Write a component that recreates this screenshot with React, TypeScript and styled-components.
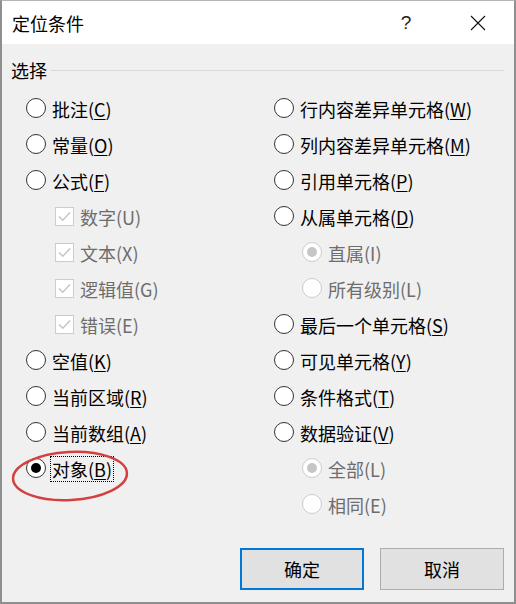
import React from "react";
import styled, { createGlobalStyle, css } from "styled-components";

const GlobalStyle = createGlobalStyle`
  html, body {
    margin: 0;
    padding: 0;
    background: #ffffff;
  }
  * {
    box-sizing: border-box;
  }
`;

const Dialog = styled.div`
  position: relative;
  width: 516px;
  height: 604px;
  display: flex;
  flex-direction: column;
  border: 2px solid #8f8f8f;
  border-top: 1px solid #b5b5b5;
  font-family: "Noto Sans CJK SC", "Microsoft YaHei", sans-serif;
  color: #000;
  background: #f0f0f0;
`;

const TitleBar = styled.div`
  height: 43px;
  display: flex;
  align-items: center;
  padding: 0 0 0 10px;
  background: #ffffff;
  font-size: 18px;
`;

const Title = styled.div`
  flex: 1;
`;

const TitleButton = styled.div`
  width: 72px;
  height: 43px;
  display: flex;
  align-items: center;
  justify-content: center;
  font-size: 19px;
  font-family: "Liberation Sans", sans-serif;
  color: #222;
`;

const Body = styled.div`
  flex: 1;
  display: flex;
  flex-direction: column;
  padding: 14px 10px 12px 9px;
`;

const GroupHeader = styled.div`
  height: 24px;
  display: flex;
  align-items: center;
  gap: 4px;
  font-size: 18px;

  &::after {
    content: "";
    flex: 1;
    height: 1px;
    background: #dadada;
    margin-top: 1px;
  }
`;

const Columns = styled.div`
  display: grid;
  grid-template-columns: 248px 1fr;
  padding-left: 15px;
  margin-top: 8px;
`;

const Column = styled.div`
  display: flex;
  flex-direction: column;
`;

const Row = styled.div<{ $indent?: boolean }>`
  position: relative;
  height: 36px;
  display: flex;
  align-items: center;
  padding-left: ${(p) => (p.$indent ? 28 : 0)}px;
`;

const Label = styled.span<{ $disabled?: boolean; $focused?: boolean }>`
  font-size: 18px;
  line-height: 24px;
  margin-left: 4px;
  padding: 0 1px;
  white-space: nowrap;
  color: ${(p) => (p.$disabled ? "#6d6d6d" : "#000")};
  border: 1px dotted ${(p) => (p.$focused ? "#000" : "transparent")};
  margin-top: 1px;

  u {
    text-decoration-thickness: 1px;
    text-underline-offset: 2px;
  }
`;

const RadioCircle = styled.span<{ $checked?: boolean; $disabled?: boolean }>`
  flex: none;
  width: 20px;
  height: 20px;
  border-radius: 50%;
  background: #ffffff;
  border: 1px solid ${(p) => (p.$disabled ? "#cccccc" : "#333333")};
  display: flex;
  align-items: center;
  justify-content: center;

  ${(p) =>
    p.$checked &&
    css`
      &::after {
        content: "";
        width: 10px;
        height: 10px;
        border-radius: 50%;
        background: ${p.$disabled ? "#c6c6c6" : "#000"};
      }
    `}
`;

const CheckBox = styled.span`
  flex: none;
  width: 19px;
  height: 19px;
  margin-left: 1px;
  border: 1px solid #cccccc;
  background: #ffffff;
  display: flex;
  align-items: center;
  justify-content: center;
`;

const Ellipse = styled.svg`
  position: absolute;
  left: 7px;
  top: 448px;
  pointer-events: none;
`;

const Footer = styled.div`
  margin-top: auto;
  display: flex;
  justify-content: flex-end;
  gap: 16px;
`;

const Button = styled.button<{ $primary?: boolean }>`
  width: 124px;
  height: 42px;
  background: #e1e1e1;
  font-family: "Noto Sans CJK SC", "Microsoft YaHei", sans-serif;
  font-size: 18px;
  color: #000;
  border: ${(p) => (p.$primary ? "2px solid #0078d7" : "1px solid #adadad")};
  padding: 0;
`;

type Item = {
  text: string;
  key?: string;
  kind?: "radio" | "check";
  indent?: boolean;
  disabled?: boolean;
  checked?: boolean;
  focused?: boolean;
};

const leftItems: Item[] = [
  { text: "批注", key: "C" },
  { text: "常量", key: "O" },
  { text: "公式", key: "F" },
  { text: "数字", key: "U", kind: "check", indent: true, disabled: true, checked: true },
  { text: "文本", key: "X", kind: "check", indent: true, disabled: true, checked: true },
  { text: "逻辑值", key: "G", kind: "check", indent: true, disabled: true, checked: true },
  { text: "错误", key: "E", kind: "check", indent: true, disabled: true, checked: true },
  { text: "空值", key: "K" },
  { text: "当前区域", key: "R" },
  { text: "当前数组", key: "A" },
  { text: "对象", key: "B", checked: true, focused: true },
];

const rightItems: Item[] = [
  { text: "行内容差异单元格", key: "W" },
  { text: "列内容差异单元格", key: "M" },
  { text: "引用单元格", key: "P" },
  { text: "从属单元格", key: "D" },
  { text: "直属", key: "I", indent: true, disabled: true, checked: true },
  { text: "所有级别", key: "L", indent: true, disabled: true },
  { text: "最后一个单元格", key: "S" },
  { text: "可见单元格", key: "Y" },
  { text: "条件格式", key: "T" },
  { text: "数据验证", key: "V" },
  { text: "全部", key: "L", indent: true, disabled: true, checked: true },
  { text: "相同", key: "E", indent: true, disabled: true },
];

const CheckMark = () => (
  <svg width="13" height="11" viewBox="0 0 13 11">
    <path d="M1 5.5 L4.8 9.2 L12 1.5" fill="none" stroke="#c4c4c4" strokeWidth="1.4" />
  </svg>
);

const Option: React.FC<{ item: Item }> = ({ item }) => (
  <Row $indent={item.indent}>
    {item.kind === "check" ? (
      <CheckBox>{item.checked && <CheckMark />}</CheckBox>
    ) : (
      <RadioCircle $checked={item.checked} $disabled={item.disabled} />
    )}
    <Label $disabled={item.disabled} $focused={item.focused}>
      {item.text}(
      {item.disabled ? item.key : <u>{item.key}</u>})
    </Label>
  </Row>
);

const App: React.FC = () => {
  return (
    <>
      <GlobalStyle />
      <Dialog>
        <TitleBar>
          <Title>定位条件</Title>
          <TitleButton>?</TitleButton>
          <TitleButton>
            <svg width="16" height="16" viewBox="0 0 16 16">
              <path d="M1 1 L15 15 M15 1 L1 15" stroke="#111" strokeWidth="1.1" />
            </svg>
          </TitleButton>
        </TitleBar>
        <Body>
          <GroupHeader>选择</GroupHeader>
          <Columns>
            <Column>
              {leftItems.map((item, i) => (
                <Option key={i} item={item} />
              ))}
            </Column>
            <Column>
              {rightItems.map((item, i) => (
                <Option key={i} item={item} />
              ))}
            </Column>
          </Columns>
          <Footer>
            <Button $primary>确定</Button>
            <Button>取消</Button>
          </Footer>
        </Body>
        <Ellipse width="124" height="56" viewBox="0 0 124 56">
          <ellipse
            cx="61"
            cy="27"
            rx="57"
            ry="24"
            fill="none"
            stroke="#d4403f"
            strokeWidth="2.5"
            transform="rotate(-3 61 27)"
          />
        </Ellipse>
      </Dialog>
    </>
  );
};

export default App;
